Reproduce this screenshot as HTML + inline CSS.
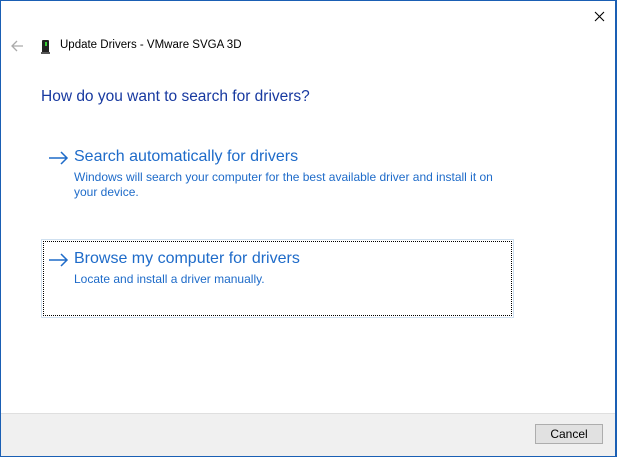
<!DOCTYPE html>
<html><head><style>
html,body{margin:0;padding:0;}
body{width:618px;height:458px;position:relative;overflow:hidden;background:#fff;font-family:"Segoe UI","Liberation Sans",sans-serif;}
.win{position:absolute;left:0;top:0;width:617px;height:457px;border-top:1px solid #1a5fb4;border-left:1px solid #1a5fb4;border-right:2px solid #1a5fb4;border-bottom:2px solid #1a5fb4;box-sizing:border-box;background:#fff;}
.t{position:absolute;white-space:nowrap;}
.footer{position:absolute;left:1px;top:413px;width:614px;height:42px;background:#f0f0f0;border-top:1px solid #dfdfdf;}
.btn{position:absolute;left:535px;top:424px;width:68px;height:20px;border:1px solid #adadad;background:#e1e1e1;box-sizing:border-box;font-size:12px;text-align:center;line-height:18px;color:#000;}
.box{position:absolute;left:41px;top:239px;width:473px;height:79px;border:1px solid #cfe0f0;box-sizing:border-box;}
.box div{position:absolute;left:1px;top:1px;right:1px;bottom:1px;border:1px dotted #000;}
.h{color:#1e6bc9;font-size:16px;}
.s{color:#1e6bc9;font-size:12px;}
</style></head><body>
<div class="win"></div>
<svg class="t" style="left:594px;top:11px" width="11" height="11"><path d="M1 1L10 10M10 1L1 10" stroke="#000" stroke-width="1.1"/></svg>
<svg class="t" style="left:10px;top:40px" width="14" height="12"><path d="M13 6H2M7 1L2 6L7 11" stroke="#aaa" stroke-width="1.3" fill="none"/></svg>
<div class="t" style="left:42px;top:40px;width:7px;height:13px;background:#222;border-radius:1px"></div>
<div class="t" style="left:45px;top:42px;width:2px;height:4px;background:#3c3"></div>
<div class="t" style="left:41px;top:52px;width:9px;height:2px;background:#555"></div>
<div class="t" style="left:60px;top:39px;font-size:11.5px;color:#000">Update Drivers - VMware SVGA 3D</div>
<div class="t" style="left:41px;top:88px;font-size:15.5px;color:#1739a0">How do you want to search for drivers?</div>
<svg class="t" style="left:48px;top:151px" width="21" height="14"><path d="M1 7H19M13 1L19 7L13 13" stroke="#1e6bc9" stroke-width="1.5" fill="none"/></svg>
<div class="t h" style="left:74px;top:148px">Search automatically for drivers</div>
<div class="t s" style="left:74px;top:170px;line-height:15px">Windows will search your computer for the best available driver and install it on<br>your device.</div>
<div class="box"><div></div></div>
<svg class="t" style="left:48px;top:253px" width="21" height="14"><path d="M1 7H19M13 1L19 7L13 13" stroke="#1e6bc9" stroke-width="1.5" fill="none"/></svg>
<div class="t h" style="left:74px;top:250px">Browse my computer for drivers</div>
<div class="t s" style="left:74px;top:272px">Locate and install a driver manually.</div>
<div class="footer"></div>
<div class="btn">Cancel</div>
</body></html>
